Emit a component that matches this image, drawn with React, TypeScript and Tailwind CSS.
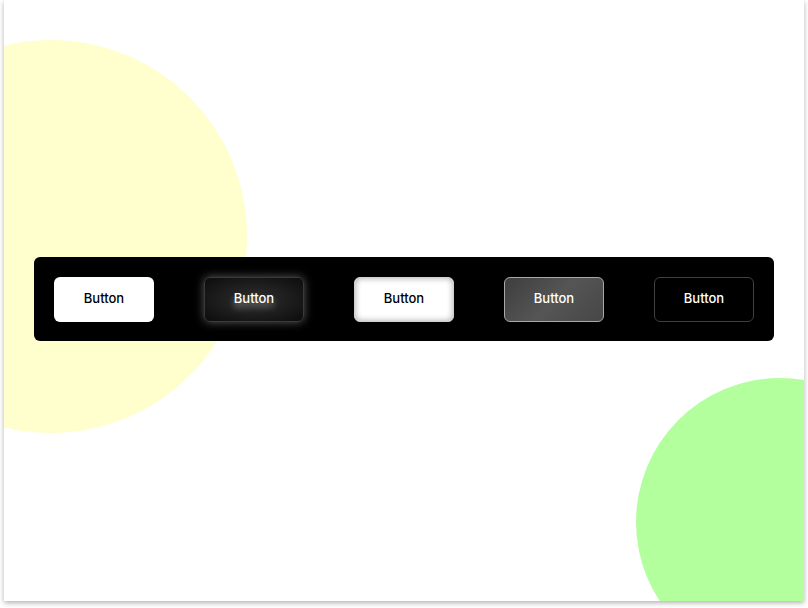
import React from 'react';

const btnBase =
  'w-[100px] h-[45px] rounded-md flex items-center justify-center text-[13px] font-medium font-["Inter",sans-serif]';

export default function App() {
  return (
    <div className="w-[808px] h-[608px] bg-white">
      <div className="relative ml-1 w-[800px] h-[601px] overflow-hidden bg-white shadow-[0_2px_5px_rgba(0,0,0,0.3)] flex items-center justify-center">
        {/* Background blobs */}
        <div className="absolute left-[-149px] top-[40px] w-[392px] h-[393px] rounded-full bg-[#feffcd]"></div>
        <div className="absolute left-[632px] top-[378px] w-[288px] h-[288px] rounded-full bg-[#b3ff9e]"></div>

        <div className="relative z-10 mb-[3px] w-[740px] h-[84px] bg-black rounded-md px-5 flex items-center justify-between">
          <button className={`${btnBase} bg-white text-black`}>Button</button>

          <button
            className={`${btnBase} text-white border border-[#3a3a3a] bg-[radial-gradient(ellipse_at_center,#2e2e2e_0%,#1c1c1c_55%,#0c0c0c_100%)] shadow-[0_0_10px_rgba(255,255,255,0.35)] [text-shadow:0_5px_6px_rgba(255,255,255,0.45)]`}
          >
            Button
          </button>

          <button
            className={`${btnBase} bg-white text-black border border-[#d0d0d0] shadow-[inset_0_0_6px_rgba(0,0,0,0.35)]`}
          >
            Button
          </button>

          <button
            className={`${btnBase} text-white border border-[#a8a8a8] bg-[linear-gradient(135deg,#3e3e3e_0%,#555555_50%,#474747_100%)]`}
          >
            Button
          </button>

          <button className={`${btnBase} bg-black text-white border border-[#3f3f3f]`}>Button</button>
        </div>
      </div>
    </div>
  );
}
